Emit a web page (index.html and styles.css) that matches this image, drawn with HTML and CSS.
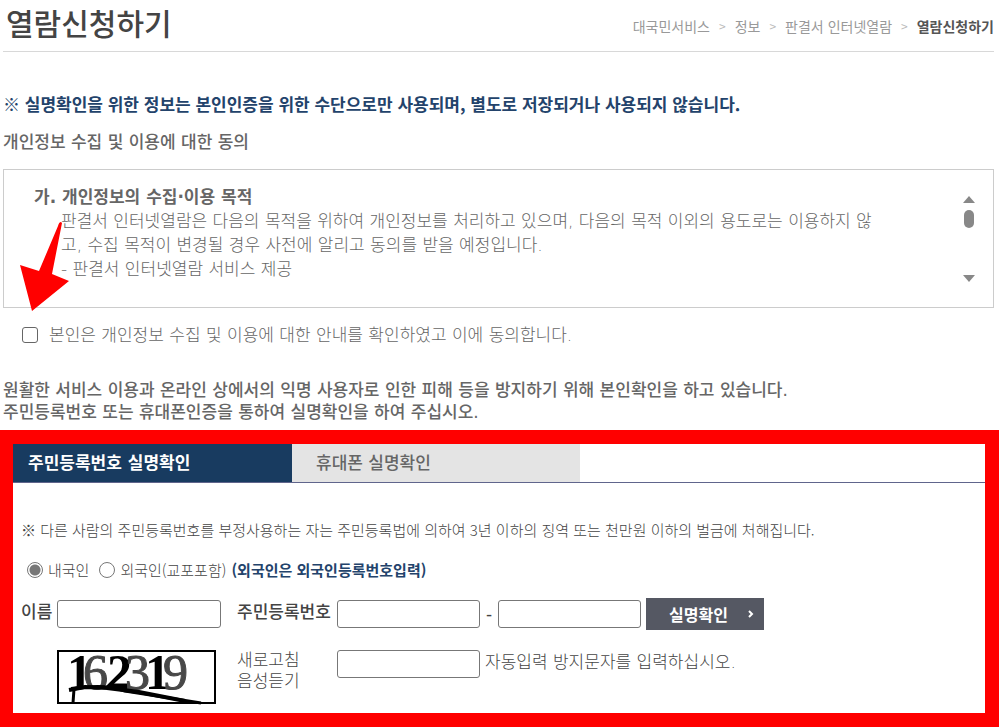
FILE: index.html
```html
<!DOCTYPE html>
<html lang="ko">
  <head>
    <meta charset="UTF-8" />
    <meta name="viewport" content="width=device-width, initial-scale=1.0" />
    <title>열람신청하기</title>
    <link rel="stylesheet" href="styles.css">
  </head>
  <body>
    <div class="container">
      <header class="page-header">
        <h1>열람신청하기</h1>
        <nav class="breadcrumb">
          <a href="#">대국민서비스</a>
          <span class="sep">&gt;</span>
          <a href="#">정보</a>
          <span class="sep">&gt;</span>
          <a href="#">판결서 인터넷열람</a>
          <span class="sep">&gt;</span>
          <strong>열람신청하기</strong>
        </nav>
      </header>

      <p class="notice">※ 실명확인을 위한 정보는 본인인증을 위한 수단으로만 사용되며, 별도로 저장되거나 사용되지 않습니다.</p>
      <h2>개인정보 수집 및 이용에 대한 동의</h2>

      <section class="terms">
        <div class="terms-text">
          <h3>가. 개인정보의 수집·이용 목적</h3>
          <p>판결서 인터넷열람은 다음의 목적을 위하여 개인정보를 처리하고 있으며, 다음의 목적 이외의 용도로는 이용하지 않<br>고, 수집 목적이 변경될 경우 사전에 알리고 동의를 받을 예정입니다.</p>
          <p>- 판결서 인터넷열람 서비스 제공</p>
        </div>
        <svg class="scrollbar" width="16" height="92" viewBox="0 0 16 92">
          <path d="M2 8 L8 1 L14 8 Z" />
          <rect x="3" y="15" width="10" height="18" rx="5" />
          <path d="M2 80 L14 80 L8 87 Z" />
        </svg>
        <svg class="arrow" width="50" height="90" viewBox="0 0 50 90">
          <path d="M41 0 L42 1 L32 52 L49 59 L12 89 L0 43 L19 49 L38 4 Q39 0 41 0 Z" />
        </svg>
      </section>

      <div class="agree">
        <input type="checkbox" id="agree" />
        <label for="agree">본인은 개인정보 수집 및 이용에 대한 안내를 확인하였고 이에 동의합니다.</label>
      </div>

      <p class="guide">원활한 서비스 이용과 온라인 상에서의 익명 사용자로 인한 피해 등을 방지하기 위해 본인확인을 하고 있습니다.<br>주민등록번호 또는 휴대폰인증을 통하여 실명확인을 하여 주십시오.</p>
    </div>

    <section class="verify">
      <div class="tabs">
        <button type="button" class="tab active">주민등록번호 실명확인</button>
        <button type="button" class="tab">휴대폰 실명확인</button>
      </div>

      <form class="verify-form">
        <p class="warning">※ 다른 사람의 주민등록번호를 부정사용하는 자는 주민등록법에 의하여 3년 이하의 징역 또는 천만원 이하의 벌금에 처해집니다.</p>

        <div class="nation">
          <input type="radio" id="domestic" name="nation" checked />
          <label for="domestic">내국인</label>
          <input type="radio" id="foreign" name="nation" />
          <label for="foreign">외국인(교포포함)</label>
          <strong>(외국인은 외국인등록번호입력)</strong>
        </div>

        <div class="fields">
          <label for="name" class="field-label">이름</label>
          <input type="text" id="name" name="name" class="name-input" />
          <label for="jumin1" class="field-label">주민등록번호</label>
          <div class="field-group">
            <input type="text" id="jumin1" name="jumin1" />
            <span class="dash">-</span>
            <input type="password" id="jumin2" name="jumin2" aria-label="주민등록번호 뒷자리" />
            <button type="submit" class="submit">
              실명확인
              <svg width="6" height="8" viewBox="0 0 6 8"><path d="M1 1 L4 4 L1 7" /></svg>
            </button>
          </div>

          <svg class="captcha" width="159" height="54" viewBox="0 0 159 54">
            <rect x="1" y="1" width="157" height="52" />
            <text y="39"><tspan x="10">1</tspan><tspan x="26" class="gray">6</tspan><tspan x="50">2</tspan><tspan x="68" class="gray">3</tspan><tspan x="88">1</tspan><tspan x="106" class="gray">9</tspan></text>
            <path d="M16 53 L17 39 L31 37 Q50 35 68 41 L144 53" />
            <path class="thick" d="M50 38 L82 42 L128 51" />
            <path class="thick" d="M12 40 L28 37 L50 38 L68 20" />
          </svg>
          <div class="captcha-links">
            <a href="#">새로고침</a>
            <a href="#">음성듣기</a>
          </div>
          <div class="field-group captcha-group">
            <input type="text" id="captcha" name="captcha" />
            <label for="captcha">자동입력 방지문자를 입력하십시오.</label>
          </div>
        </div>
      </form>
    </section>
  </body>
</html>
```
FILE: styles.css
```css
* {
  box-sizing: border-box;
}
body {
  margin: 0;
  background-color: #fff;
  color: #666;
  font-family: "DejaVu Sans", "Noto Sans CJK KR", sans-serif;
  font-size: 17px;
  line-height: 24px;
}
h1,
h2,
h3,
p {
  margin: 0;
}
a {
  color: inherit;
  text-decoration: none;
}
input,
button {
  margin: 0;
  font-family: inherit;
}
.container {
  padding: 0 6px 0 3px;
}

/* header */
.page-header {
  display: flex;
  justify-content: space-between;
  height: 52px;
  padding-left: 3px;
  border-bottom: 1px solid #d8d8d8;
  font-family: "Noto Sans CJK KR", sans-serif;
}
h1 {
  color: #444;
  font-size: 30px;
  font-weight: 500;
  line-height: 44px;
}
.breadcrumb {
  display: flex;
  gap: 9px;
  padding-top: 14px;
  color: #999;
  font-size: 14px;
}
.breadcrumb .sep {
  color: #bbb;
  font-size: 12px;
}
.breadcrumb strong {
  color: #555;
  font-weight: 700;
}

.notice {
  margin-top: 40px;
  color: #23436b;
  font-family: "Noto Sans CJK KR", sans-serif;
  font-weight: 700;
}
h2 {
  margin-top: 14px;
  font-size: 17px;
  font-weight: 500;
}

/* terms */
.terms {
  position: relative;
  display: flex;
  justify-content: space-between;
  height: 139px;
  margin-top: 15px;
  padding: 15px 16px 0 30px;
  border: 1px solid #ccc;
}
.terms h3 {
  font-size: 17px;
  font-weight: 700;
}
.terms p {
  padding-left: 27px;
  color: #666;
  font-weight: 300;
  white-space: nowrap;
}
.scrollbar {
  flex: none;
  margin-top: 10px;
  fill: #888;
}
.arrow {
  position: absolute;
  left: 16px;
  top: 52px;
  fill: #f00;
}
.agree {
  display: flex;
  align-items: center;
  gap: 11px;
  margin-top: 15px;
  padding-left: 19px;
  color: #666;
  font-weight: 300;
}
.agree input {
  width: 16px;
  height: 16px;
  appearance: none;
  border: 1px solid #666;
  border-radius: 3px;
}
.guide {
  margin-top: 32px;
  font-weight: 500;
  line-height: 22px;
}

/* verification */
.verify {
  margin: 7px 1px 0 0;
  border: 14px solid #f00;
  border-left-width: 13px;
}
.tabs {
  display: flex;
  border-bottom: 1px solid #60658c;
}
.tab {
  width: 288px;
  height: 38px;
  padding: 0 24px 4px;
  border: 0;
  background-color: #e4e4e4;
  color: #666;
  font-size: 17px;
  font-weight: 500;
  text-align: left;
  cursor: pointer;
}
.tab.active {
  width: 279px;
  padding-left: 15px;
  background-color: #183b60;
  color: #fff;
  font-weight: 700;
}
.verify-form {
  height: 230px;
  padding: 35px 8px 0;
  color: #444;
}
.warning {
  font-family: "Noto Sans CJK KR", sans-serif;
  font-size: 15px;
  font-weight: 300;
}
.nation {
  display: flex;
  align-items: center;
  gap: 5px;
  margin-top: 16px;
  padding-left: 6px;
  font-family: "Noto Sans CJK KR", sans-serif;
  font-size: 15px;
  font-weight: 300;
}
.nation input {
  width: 16px;
  height: 16px;
  appearance: none;
  border: 1px solid #777;
  border-radius: 50%;
}
.nation input:checked {
  background: radial-gradient(circle, #777 5px, #fff 6px);
}
.nation label + input {
  margin-left: 5px;
}
.nation strong {
  color: #23436b;
  font-weight: 700;
}
.fields {
  display: grid;
  grid-template-columns: 36px 180px 100px 1fr;
  row-gap: 20px;
  margin-top: 16px;
}
.field-label {
  padding-top: 2px;
  font-weight: 500;
}
.fields input {
  width: 143px;
  height: 28px;
  border: 1px solid #777;
  border-radius: 3px;
  background-color: #fff;
}
.fields .name-input {
  width: 164px;
  margin-top: 2px;
}
.field-group {
  display: flex;
  align-items: center;
}
.dash {
  width: 18px;
  text-align: center;
}
.submit {
  display: flex;
  align-items: center;
  justify-content: space-between;
  width: 118px;
  height: 32px;
  margin-left: 5px;
  padding: 0 10px 0 23px;
  border: 0;
  background-color: #555863;
  color: #fff;
  font-size: 16px;
  font-weight: 700;
  cursor: pointer;
}
.submit svg {
  fill: none;
  stroke: #fff;
  stroke-width: 2;
}
.captcha {
  grid-column: 2;
  font-family: "Liberation Serif", serif;
  font-size: 50px;
  font-weight: 700;
  overflow: visible;
}
.captcha .gray {
  fill: #484848;
  font-weight: 400;
  stroke: #484848;
}
.captcha rect {
  fill: #fff;
  stroke: #000;
  stroke-width: 2;
}
.captcha path {
  fill: none;
  stroke: #000;
  stroke-width: 3;
}
.captcha .thick {
  stroke-width: 4;
}
.captcha-links {
  display: flex;
  flex-direction: column;
  font-weight: 300;
  line-height: 21px;
}
.captcha-group {
  align-items: flex-start;
  gap: 5px;
  font-weight: 300;
}
```
